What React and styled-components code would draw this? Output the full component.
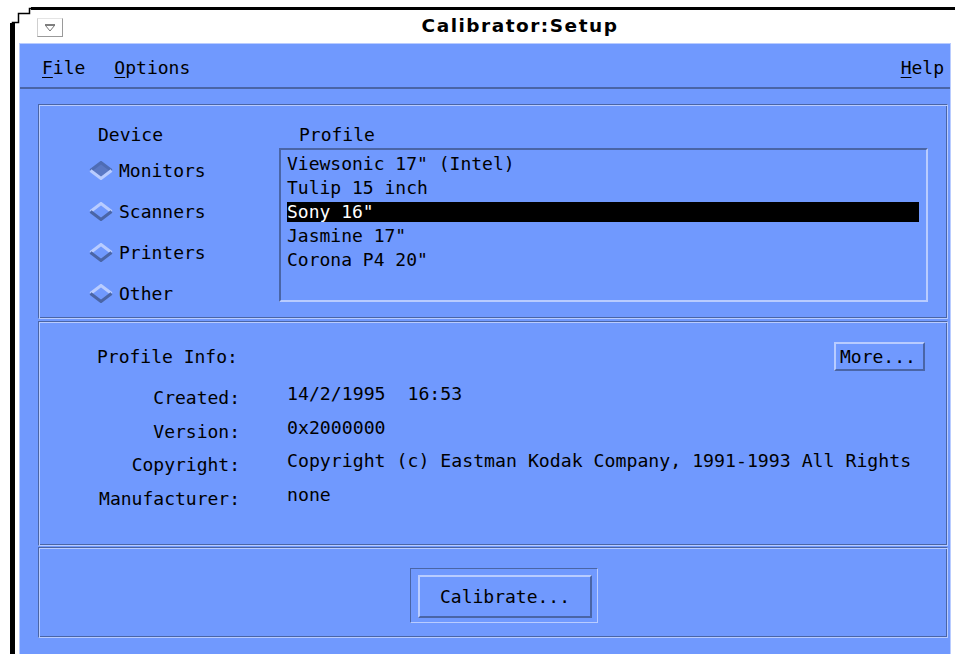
import styled, { createGlobalStyle, css } from 'styled-components';

const BLUE = '#7099fe';
const DARK = '#4a65a6';
const LIGHT = '#b9ccff';
const MONO = '"DejaVu Sans Mono", "Liberation Mono", monospace';

const GlobalStyle = createGlobalStyle`
  html, body {
    margin: 0;
    padding: 0;
    background: #ffffff;
    height: 100%;
    overflow: hidden;
  }
  body {
    font-family: ${MONO};
    font-size: 18px;
    color: #000;
  }
`;

// bevel helpers: sunken = dark on top/left, raised = light on top/left
const etched = css`
  border: 1px solid;
  border-color: ${DARK} ${LIGHT} ${LIGHT} ${DARK};
  box-shadow: inset 1px 1px 0 ${LIGHT}, inset -1px -1px 0 ${DARK};
`;

const raised = css`
  border: 2px solid;
  border-color: ${LIGHT} ${DARK} ${DARK} ${LIGHT};
`;

const Frame = styled.div`
  position: relative;
  margin: 7px 0 0 10px;
  height: 647px;
  border-top: 3px solid #000;
  border-left: 5px solid #000;
  box-sizing: border-box;
  display: flex;
  flex-direction: column;
`;

const Corner = styled.svg`
  position: absolute;
  top: -3px;
  left: -5px;
`;

const TitleBar = styled.div`
  height: 33px;
  display: flex;
  align-items: center;
  padding: 0 0 3px 22px;
  box-sizing: border-box;
  background: #fff;
`;

const CloseBox = styled.div`
  width: 26px;
  height: 19px;
  box-sizing: border-box;
  border: 1px solid;
  border-color: #e4e4e4 #9a9a9a #9a9a9a #cfcfcf;
  display: flex;
  align-items: center;
  justify-content: center;
  margin-top: 5px;
`;

const Title = styled.div`
  flex: 1;
  margin-left: 22px;
  text-align: center;
  font-family: "DejaVu Sans", "Liberation Sans", sans-serif;
  font-weight: bold;
  font-size: 18.5px;
  letter-spacing: 1.5px;
`;

const Window = styled.div`
  flex: 1;
  margin: 0 4px 0 4px;
  background: ${BLUE};
  border-left: 1px solid ${LIGHT};
  border-right: 1px solid ${LIGHT};
  border-top: 1px solid ${LIGHT};
  display: flex;
  flex-direction: column;
`;

const MenuBar = styled.div`
  height: 45px;
  box-sizing: border-box;
  display: flex;
  align-items: center;
  padding: 3px 6px 0 22px;
  border-bottom: 2px solid ${DARK};
  gap: 29px;
`;

const MenuItem = styled.span`
  margin-left: ${(p) => (p.$right ? 'auto' : '0')};
  u {
    text-decoration: underline;
    text-underline-offset: 3px;
  }
`;

const Body = styled.div`
  padding: 15px 2px 0 18px;
  display: flex;
  flex-direction: column;
`;

const Panel = styled.div`
  ${etched};
  box-sizing: border-box;
  height: ${(p) => p.$h}px;
  margin-top: ${(p) => p.$gap || 0}px;
`;

const SelectPanel = styled(Panel)`
  display: flex;
  padding: 20px 19px 0 50px;
`;

const DeviceCol = styled.div`
  width: 190px;
  display: flex;
  flex-direction: column;
`;

const Heading = styled.div`
  height: 20px;
  line-height: 20px;
  margin-left: ${(p) => p.$indent}px;
  margin-bottom: ${(p) => p.$after}px;
`;

const Radio = styled.div`
  height: 41px;
  display: flex;
  align-items: center;
  gap: 6px;
`;

const ProfileCol = styled.div`
  flex: 1;
  display: flex;
  flex-direction: column;
`;

const ListBox = styled.div`
  height: 154px;
  box-sizing: border-box;
  border: 2px solid;
  border-color: ${DARK} ${LIGHT} ${LIGHT} ${DARK};
  padding: 4px 7px 0 6px;
`;

const ListItem = styled.div`
  height: 20px;
  line-height: 20px;
  margin-bottom: 4px;
  white-space: pre;
  ${(p) =>
    p.$selected &&
    css`
      background: #000;
      color: #fff;
    `}
`;

const InfoPanel = styled(Panel)`
  padding: 20px 22px 0 58px;
`;

const InfoHead = styled.div`
  display: flex;
  align-items: center;
  justify-content: space-between;
  height: 29px;
`;

const SmallButton = styled.div`
  ${raised};
  box-sizing: border-box;
  width: 91px;
  height: 29px;
  line-height: 25px;
  padding-left: 4px;
`;

const InfoGrid = styled.div`
  display: grid;
  grid-template-columns: 143px auto;
  column-gap: 47px;
  row-gap: 9.5px;
  margin-top: 13px;
`;

const InfoLabel = styled.div`
  text-align: right;
  padding-top: 4px;
  line-height: 20px;
`;

const InfoValue = styled.div`
  line-height: 20px;
  white-space: pre;
  font-size: 18.2px;
`;

const ActionPanel = styled(Panel)`
  display: flex;
  justify-content: center;
  align-items: flex-start;
  padding: 20px 0 0 22px;
`;

const ButtonWell = styled.div`
  border: 1px solid;
  border-color: ${DARK} ${LIGHT} ${LIGHT} ${DARK};
  padding: 6px 5px 4px 7px;
`;

const BigButton = styled.div`
  ${raised};
  box-sizing: border-box;
  width: 174px;
  height: 43px;
  display: flex;
  align-items: center;
  justify-content: center;
`;

// toggle diamond: raised when off, pressed in when on
const Diamond = ({ on }) => (
  <svg width="24" height="19" viewBox="0 0 24 19">
    <polygon points="12,1.5 22.5,9.5 12,17.5 1.5,9.5" fill={on ? '#5a78c4' : BLUE} />
    <polyline points="1.5,9.5 12,1.5 22.5,9.5" fill="none" stroke={on ? '#4e6cb4' : LIGHT} strokeWidth="3" strokeLinejoin="miter" />
    <polyline points="1.5,9.5 12,17.5 22.5,9.5" fill="none" stroke={on ? LIGHT : DARK} strokeWidth="3" strokeLinejoin="miter" />
  </svg>
);

const devices = ['Monitors', 'Scanners', 'Printers', 'Other'];

const profiles = [
  'Viewsonic 17" (Intel)',
  'Tulip 15 inch',
  'Sony 16"',
  'Jasmine 17"',
  'Corona P4 20"',
];

const info = [
  ['Created:', '14/2/1995  16:53'],
  ['Version:', '0x2000000'],
  ['Copyright:', 'Copyright (c) Eastman Kodak Company, 1991-1993 All Rights'],
  ['Manufacturer:', 'none'],
];

export default function App() {
  return (
    <>
      <GlobalStyle />
      <Frame>
        <Corner width="21" height="17" viewBox="0 0 21 17">
          <rect x="0" y="0" width="21" height="17" fill="#fff" />
          <polyline points="2.5,17 2.5,15.5 8.5,15.5 8.5,6.5 19.5,6.5 19.5,1.5 21,1.5" fill="none" stroke="#000" strokeWidth="1.5" />
          <rect x="0" y="16" width="5" height="1" fill="#000" />
        </Corner>
        <TitleBar>
          <CloseBox>
            <svg width="12" height="8" viewBox="0 0 12 8">
              <line x1="1" y1="1" x2="11" y2="1" stroke="#555" strokeWidth="1.5" />
              <polyline points="1.5,1.5 6,7 10.5,1.5" fill="none" stroke="#777" strokeWidth="1" />
            </svg>
          </CloseBox>
          <Title>Calibrator:Setup</Title>
        </TitleBar>
        <Window>
          <MenuBar>
            <MenuItem><u>F</u>ile</MenuItem>
            <MenuItem><u>O</u>ptions</MenuItem>
            <MenuItem $right><u>H</u>elp</MenuItem>
          </MenuBar>
          <Body>
            <SelectPanel $h={215}>
              <DeviceCol>
                <Heading $indent={9} $after={5}>Device</Heading>
                {devices.map((d, i) => (
                  <Radio key={d}>
                    <Diamond on={i === 0} />
                    {d}
                  </Radio>
                ))}
              </DeviceCol>
              <ProfileCol>
                <Heading $indent={20} $after={3}>Profile</Heading>
                <ListBox>
                  {profiles.map((p, i) => (
                    <ListItem key={p} $selected={i === 2}>{p}</ListItem>
                  ))}
                </ListBox>
              </ProfileCol>
            </SelectPanel>
            <InfoPanel $h={225} $gap={2}>
              <InfoHead>
                <span>Profile Info:</span>
                <SmallButton>More...</SmallButton>
              </InfoHead>
              <InfoGrid>
                {info.map(([label, value]) => [
                  <InfoLabel key={label}>{label}</InfoLabel>,
                  <InfoValue key={label + '-value'}>{value}</InfoValue>,
                ])}
              </InfoGrid>
            </InfoPanel>
            <ActionPanel $h={91} $gap={1}>
              <ButtonWell>
                <BigButton>Calibrate...</BigButton>
              </ButtonWell>
            </ActionPanel>
          </Body>
        </Window>
      </Frame>
    </>
  );
}
